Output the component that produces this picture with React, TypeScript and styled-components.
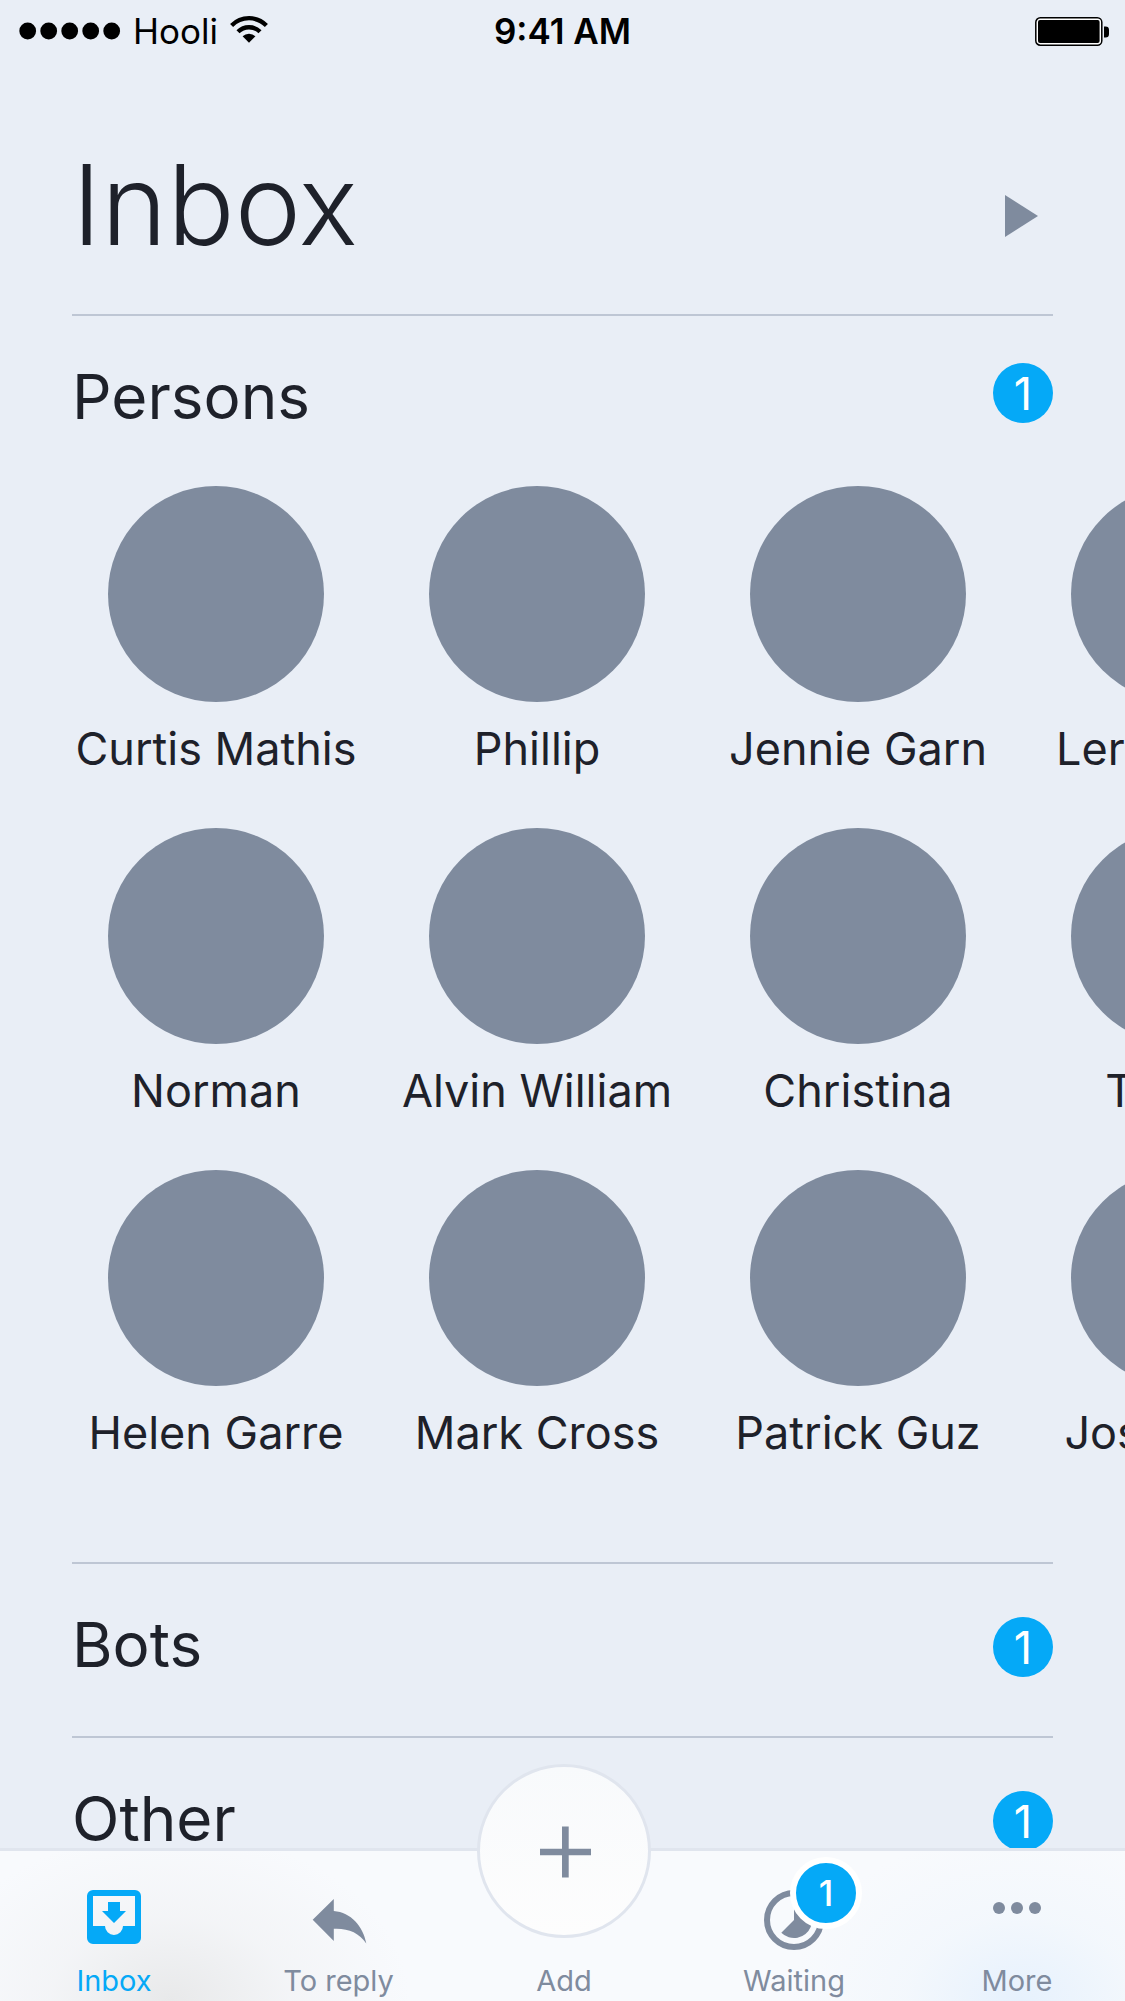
import React from "react";
import styled, { createGlobalStyle, css } from "styled-components";

const color = {
  page: "#e9eef6",
  ink: "#1e212a",
  slate: "#7f8b9e",
  line: "#bec6d4",
  edge: "#e0e5ee",
  blue: "#05a9f7",
};

const GlobalStyle = createGlobalStyle`
  * { box-sizing: border-box; }
  body {
    margin: 0;
    background: ${color.page};
    color: ${color.ink};
    font-family: Inter, "Liberation Sans", sans-serif;
  }
  button { font: inherit; color: inherit; background: none; border: 0; padding: 0; cursor: pointer; }
  h1, h2, ul { margin: 0; padding: 0; font-weight: 400; }
  ul { list-style: none; }
  svg { display: block; flex: none; }
`;

const Screen = styled.div`
  display: flex;
  flex-direction: column;
  height: 100vh;
  overflow: hidden;
`;

const StatusBar = styled.header`
  display: grid;
  grid-template-columns: 1fr auto 1fr;
  align-items: center;
  height: 62px;
  flex: none;
  padding: 0 16px;
  color: #000;
  font-size: 35px;
`;

const Carrier = styled.div`
  display: flex;
  align-items: center;
  gap: 12px;
`;

const Clock = styled.time`
  font-weight: 600;
`;

const Power = styled.div`
  display: flex;
  justify-content: flex-end;
`;

const Content = styled.main`
  flex: 1;
  min-height: 0;
  overflow-x: hidden;
  overflow-y: auto;
  scrollbar-width: none;
  padding-left: 72px;
`;

const TitleRow = styled.div`
  display: flex;
  justify-content: space-between;
  align-items: flex-end;
  margin-right: 72px;
  padding: 72px 0 40px;
`;

const Title = styled.h1`
  && { font-weight: 300; }
  font-size: 112px;
  line-height: 140px;
`;

const PlayButton = styled.button`
  display: grid;
  place-items: center;
  width: 64px;
  height: 116px;
`;

const Section = styled.section<{ $open?: boolean }>`
  padding: 49px 0 ${(p) => (p.$open ? 102 : 53)}px;
  background: linear-gradient(${color.line}, ${color.line}) 0 0 / calc(100% - 72px) 2px no-repeat;
`;

const SectionHeader = styled.div`
  display: flex;
  justify-content: space-between;
  height: 72px;
  margin-right: 72px;
`;

const SectionTitle = styled.h2`
  font-size: 62px;
  line-height: 68px;
`;

const badgeBase = css`
  display: flex;
  align-items: center;
  justify-content: center;
  border-radius: 50%;
  background: ${color.blue};
  color: #fff;
`;

const Badge = styled.span<{ $top?: boolean }>`
  ${badgeBase}
  align-self: ${(p) => (p.$top ? "flex-start" : "center")};
  width: 60px;
  height: 60px;
  font-size: 45px;
`;

const People = styled.ul`
  display: grid;
  grid-template-columns: repeat(4, 288px);
  gap: 52px 33px;
  margin-top: 51px;
  overflow-x: auto;
  scrollbar-width: none;
`;

const Person = styled.button`
  display: flex;
  flex-direction: column;
  align-items: center;
  gap: 20px;
  width: 100%;
  font-size: 45px;
  line-height: 54px;
  white-space: nowrap;
`;

const Avatar = styled.span`
  width: 216px;
  height: 216px;
  border-radius: 50%;
  background: ${color.slate};
`;

const TabBar = styled.nav`
  flex: none;
  display: grid;
  grid-template-columns: 228fr 221fr 230fr 230fr 216fr;
  border-top: 3px solid ${color.edge};
  background:
    radial-gradient(ellipse 240px 170px at 170px 100%, #e8e9ea, rgba(240, 241, 243, 0.6) 50%, rgba(248, 250, 253, 0)),
    radial-gradient(ellipse 230px 170px at calc(100% - 105px) 100%, #e6f1fd, rgba(240, 246, 252, 0.6) 50%, rgba(248, 250, 253, 0)),
    #f8fafd;
`;

const Tab = styled.button<{ $active?: boolean }>`
  position: relative;
  display: flex;
  flex-direction: column;
  align-items: center;
  gap: 12px;
  padding: 39px 0 1px;
  color: ${(p) => (p.$active ? color.blue : color.slate)};
  font-size: 29px;
  line-height: 38px;
`;

const IconSlot = styled.span`
  position: relative;
  width: 60px;
  height: 60px;
`;

const TabBadge = styled.span`
  ${badgeBase}
  position: absolute;
  top: -33px;
  left: 26px;
  width: 72px;
  height: 72px;
  border: 6px solid #fff;
  font-size: 35px;
  font-weight: 500;
`;

const AddCircle = styled.span`
  position: absolute;
  top: -87px;
  left: calc(50% - 87px);
  display: grid;
  place-items: center;
  width: 174px;
  height: 174px;
  border: 3px solid ${color.edge};
  border-radius: 50%;
  background: linear-gradient(#f8fafc, #fdfdfd);
`;

const SignalIcon = () => (
  <svg width="105" height="18" viewBox="0 0 105 18" fill="currentColor" aria-hidden="true">
    {[0, 1, 2, 3, 4].map((i) => (
      <circle key={i} cx={11.7 + i * 21} cy="9" r="8.4" />
    ))}
  </svg>
);

const WifiIcon = () => (
  <svg width="38" height="30" viewBox="0 -1 38 30" fill="none" stroke="currentColor" strokeWidth="4.3" aria-hidden="true">
    <path d="M1.6 8.5A24.4 24.4 0 0 1 36.4 8.5" />
    <path d="M8 14.8A15.6 15.6 0 0 1 30 14.8" />
    <path d="M12.6 19.3A9 9 0 0 1 25.4 19.3L19 25.8Z" fill="currentColor" stroke="none" />
  </svg>
);

const BatteryIcon = () => (
  <svg width="74" height="29" viewBox="0 0 74 29" aria-hidden="true">
    <rect x="0.8" y="0.8" width="66" height="27.4" rx="4.5" fill="#fff" stroke="#000" strokeWidth="1.5" />
    <rect x="3" y="3" width="61.6" height="23" rx="2" />
    <path d="M69 9.5h1.5a3.5 3.5 0 0 1 3.5 3.5v4a3.5 3.5 0 0 1-3.5 3.5H69z" />
  </svg>
);

const PlayIcon = () => (
  <svg width="33" height="42" viewBox="0 0 33 42" fill={color.slate} aria-hidden="true">
    <path d="M0 0L33 21L0 42Z" />
  </svg>
);

const InboxIcon = () => (
  <svg width="60" height="60" viewBox="0 0 60 60" fill="currentColor" aria-hidden="true">
    <path
      fillRule="evenodd"
      d="M9 0H51A6 6 0 0 1 57 6V48A6 6 0 0 1 51 54H9A6 6 0 0 1 3 48V6A6 6 0 0 1 9 0ZM9 6V36H21A9 9 0 0 0 39 36H51V6Z"
    />
    <path d="M24 12H36V21H42L30 33L18 21H24Z" />
  </svg>
);

const ReplyIcon = () => (
  <svg width="60" height="60" viewBox="0 0 60 60" fill="currentColor" aria-hidden="true">
    <path d="M3.7 29.8L24.8 9V21C42 22.5 54 36 57.3 53.4C50 42.5 39 38 24.8 38.7V51Z" />
  </svg>
);

const WaitingIcon = () => (
  <svg width="60" height="60" viewBox="0 0 60 60" fill="currentColor" aria-hidden="true">
    <circle cx="30" cy="30" r="27" fill="none" stroke="currentColor" strokeWidth="6" />
    <path d="M30 30V12A18 18 0 1 1 17.3 42.7Z" />
  </svg>
);

const MoreIcon = () => (
  <svg width="60" height="60" viewBox="0 0 60 60" fill="currentColor" aria-hidden="true">
    <circle cx="12" cy="18" r="6" />
    <circle cx="30" cy="18" r="6" />
    <circle cx="48" cy="18" r="6" />
  </svg>
);

const PlusIcon = () => (
  <svg width="54" height="54" viewBox="0 0 54 54" fill={color.slate} aria-hidden="true">
    <path d="M25 2.5H31.7V24.7H54V31.3H31.7V53.5H25V31.3H3V24.7H25Z" />
  </svg>
);

const people = [
  "Curtis Mathis", "Phillip", "Jennie Garn", "Leroy Wells",
  "Norman", "Alvin William", "Christina", "Tyrone",
  "Helen Garre", "Mark Cross", "Patrick Guz", "Jose Wells",
];

export default function App() {
  return (
    <Screen>
      <GlobalStyle />
      <StatusBar>
        <Carrier>
          <SignalIcon />
          <span>Hooli</span>
          <WifiIcon />
        </Carrier>
        <Clock>9:41 AM</Clock>
        <Power>
          <BatteryIcon />
        </Power>
      </StatusBar>

      <Content>
        <TitleRow>
          <Title>Inbox</Title>
          <PlayButton aria-label="Play">
            <PlayIcon />
          </PlayButton>
        </TitleRow>

        <Section $open>
          <SectionHeader>
            <SectionTitle>Persons</SectionTitle>
            <Badge $top>1</Badge>
          </SectionHeader>
          <People>
            {people.map((name) => (
              <li key={name}>
                <Person>
                  <Avatar />
                  <span>{name}</span>
                </Person>
              </li>
            ))}
          </People>
        </Section>

        {["Bots", "Other"].map((label) => (
          <Section key={label}>
            <SectionHeader>
              <SectionTitle>{label}</SectionTitle>
              <Badge>1</Badge>
            </SectionHeader>
          </Section>
        ))}
      </Content>

      <TabBar>
        <Tab $active aria-current="page">
          <IconSlot><InboxIcon /></IconSlot>
          <span>Inbox</span>
        </Tab>
        <Tab>
          <IconSlot><ReplyIcon /></IconSlot>
          <span>To reply</span>
        </Tab>
        <Tab>
          <IconSlot />
          <AddCircle><PlusIcon /></AddCircle>
          <span>Add</span>
        </Tab>
        <Tab>
          <IconSlot>
            <WaitingIcon />
            <TabBadge>1</TabBadge>
          </IconSlot>
          <span>Waiting</span>
        </Tab>
        <Tab>
          <IconSlot><MoreIcon /></IconSlot>
          <span>More</span>
        </Tab>
      </TabBar>
    </Screen>
  );
}
